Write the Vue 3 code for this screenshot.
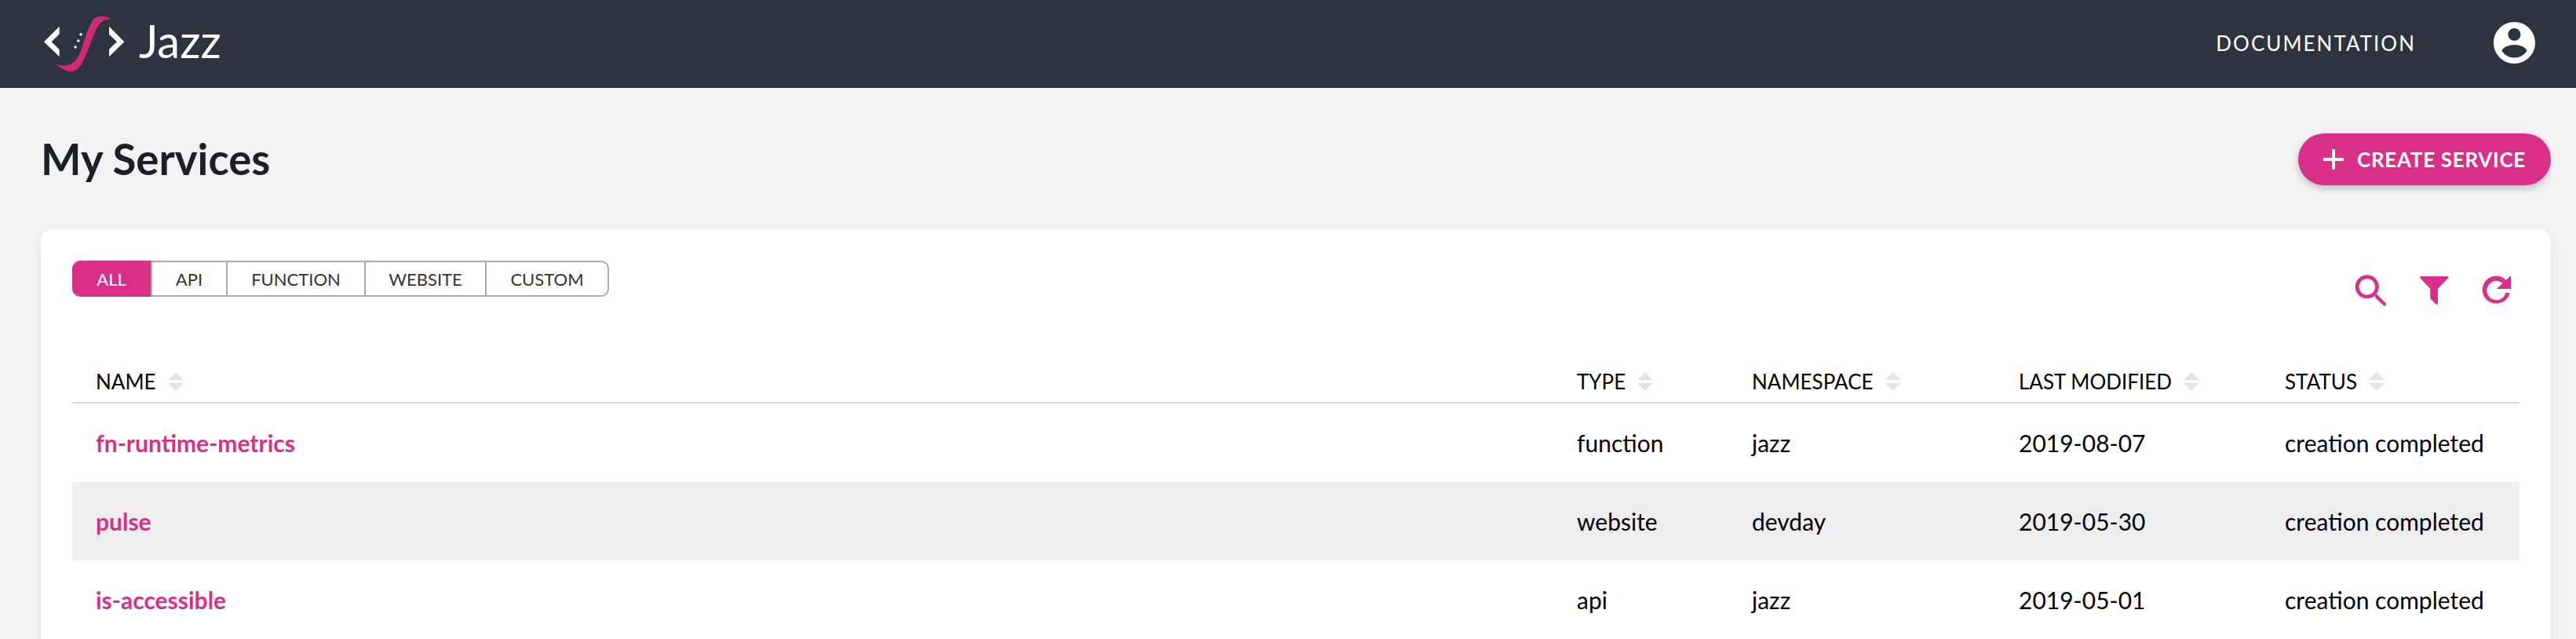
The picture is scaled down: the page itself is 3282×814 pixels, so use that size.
<script setup>
const tabs = [
  { label: 'ALL', cls: 'all' },
  { label: 'API', cls: 'api' },
  { label: 'FUNCTION', cls: 'function' },
  { label: 'WEBSITE', cls: 'website' },
  { label: 'CUSTOM', cls: 'custom' },
]
const columns = ['NAME', 'TYPE', 'NAMESPACE', 'LAST MODIFIED', 'STATUS']
const services = [
  { name: 'fn-runtime-metrics', type: 'function', namespace: 'jazz', modified: '2019-08-07', status: 'creation completed' },
  { name: 'pulse', type: 'website', namespace: 'devday', modified: '2019-05-30', status: 'creation completed' },
  { name: 'is-accessible', type: 'api', namespace: 'jazz', modified: '2019-05-01', status: 'creation completed' },
]
</script>

<template>
  <div class="page">
    <header class="topbar">
      <div class="brand">
        <svg class="logo" viewBox="45 60 315 216">
          <path fill="#fff" d="M107 101 48 160l59 57v-27L77 160l30-30zM297 101l58 59-58 57v-29l30-28-30-29z" />
          <path fill="#cf2a75" d="M305 73C283 61 248 55 233 80C213 112 202 160 183 207C167 242 142 258 96 247C118 267 143 277 163 271C192 260 204 219 220 182C245 126 252 70 305 73Z" />
          <path fill="#fff" d="m187 126 8 3-3 8-9-3zM177 150l8 3-3 8-9-3zM166 174l8 3-3 8-9-3z" />
        </svg>
        <span class="brand-name">Jazz</span>
      </div>
      <nav class="nav">
        <a class="doc-link">DOCUMENTATION</a>
        <svg class="avatar" viewBox="2 2 20 20" fill="#fff">
          <path d="M12 2C6.48 2 2 6.48 2 12s4.480 10 10 10 10-4.480 10-10S17.520 2 12 2zm0 3c1.660 0 3 1.340 3 3s-1.340 3-3 3-3-1.340-3-3 1.340-3 3-3zm0 14.200c-2.500 0-4.710-1.280-6-3.220.030-1.990 4-3.080 6-3.080 1.990 0 5.970 1.090 6 3.080-1.290 1.940-3.500 3.220-6 3.220z" />
        </svg>
      </nav>
    </header>

    <div class="title-row">
      <h1>My Services</h1>
      <div class="button-clip">
        <button class="create">
          <svg class="plus" viewBox="0 0 26 26"><path d="M13 0v26M0 13h26" stroke="#fff" stroke-width="4" /></svg>
          <span>CREATE SERVICE</span>
        </button>
      </div>
    </div>

    <main class="card">
      <div class="toolbar">
        <div class="tabs">
          <div v-for="t in tabs" :key="t.label" class="tab" :class="t.cls">{{ t.label }}</div>
        </div>
        <div class="actions">
          <svg class="icon" viewBox="360 594 132 132">
            <circle cx="410.500" cy="646" r="38" fill="none" stroke="#da2f89" stroke-width="14" />
            <path d="M441 671l8 5 36 36-9 8-35-34z" />
          </svg>
          <svg class="icon" viewBox="596 594 132 132">
            <path d="M609 606H716V613L677 653V713H670L648 691V653L609 613Z" />
          </svg>
          <svg class="icon" viewBox="837 594 132 132">
            <path d="M953 669A53 53 0 1 1 939 620L957 603V654H903L925 632A36.500 36.500 0 1 0 937 669Z" />
          </svg>
        </div>
      </div>

      <div class="table">
        <div class="row head">
          <div v-for="c in columns" :key="c" class="cell">
            <span>{{ c }}</span>
            <svg class="sort" viewBox="0 0 20 24"><path d="M10 0 20 10H0zM0 14H20L10 24z" fill="#e4e4e4" /></svg>
          </div>
        </div>
        <div v-for="s in services" :key="s.name" class="row body">
          <div class="cell name">{{ s.name }}</div>
          <div class="cell">{{ s.type }}</div>
          <div class="cell">{{ s.namespace }}</div>
          <div class="cell">{{ s.modified }}</div>
          <div class="cell">{{ s.status }}</div>
        </div>
      </div>
    </main>
  </div>
</template>

<style>
body {
  background: #f3f3f3;
  overflow: hidden;
}
</style>

<style scoped>
.page {
  height: 814px;
  overflow: hidden;
  box-sizing: border-box;
  background: #f3f3f3;
  font-family: Lato, sans-serif;
  color: #000;
}
.topbar {
  height: 112px;
  box-sizing: border-box;
  background: #2d333f;
  color: #fff;
  display: flex;
  justify-content: space-between;
  align-items: center;
  padding: 0 52px 0 55px;
}
.brand {
  display: flex;
  align-items: center;
  gap: 17px;
}
.logo {
  width: 105px;
  height: 72px;
}
.brand-name {
  font-size: 58px;
  line-height: 72px;
  padding-bottom: 8px;
}
.nav {
  display: flex;
  align-items: center;
  padding-bottom: 3px;
}
.doc-link {
  font-size: 26px;
  line-height: 32px;
  letter-spacing: 2px;
  margin-right: 99px;
}
.avatar {
  width: 53px;
  height: 53px;
}
.title-row {
  height: 180px;
  display: flex;
  justify-content: space-between;
  align-items: flex-start;
  padding: 0 32px 0 52px;
}
h1 {
  margin: 56px 0 0;
  font-size: 54.5px;
  line-height: 68px;
  font-weight: 700;
  color: #1b2028;
}
.button-clip {
  overflow: hidden;
  padding: 58px 0 20px 20px;
}
.create {
  width: 322px;
  height: 66px;
  box-sizing: border-box;
  border: 0;
  border-radius: 33px;
  padding: 0 0 0 32px;
  background: #da2f89;
  color: #fff;
  display: flex;
  align-items: center;
  gap: 17px;
  font: 700 26px/32px Lato, sans-serif;
  letter-spacing: 0.7px;
  white-space: nowrap;
  box-shadow: 0 4px 10px rgba(0, 0, 0, 0.22);
}
.plus {
  width: 26px;
  height: 26px;
}
.card {
  height: 560px;
  box-sizing: border-box;
  margin: 0 32px 0 52px;
  padding: 40px 40px 0;
  background: #fff;
  border-radius: 14px;
  box-shadow: 0 6px 16px rgba(60, 60, 110, 0.1);
}
.toolbar {
  height: 122px;
  display: flex;
  justify-content: space-between;
  align-items: flex-start;
}
.tabs {
  display: flex;
  height: 46px;
  font-size: 22px;
  color: #333;
}
.tab {
  box-sizing: border-box;
  border: 2px solid #aaa;
  border-left: 0;
  display: flex;
  align-items: center;
  justify-content: center;
}
.all {
  width: 102px;
  background: #da2f89 padding-box;
  border-color: #da2f89 #aaa #da2f89 #da2f89;
  border-radius: 10px 0 0 10px;
  color: #fff;
}
.api { width: 96px; }
.function { width: 176px; }
.website { width: 154px; }
.custom {
  width: 156px;
  border-radius: 0 10px 10px 0;
}
.actions {
  display: flex;
  gap: 36px;
  padding: 16px 7px 0 0;
}
.icon {
  width: 44px;
  height: 44px;
  fill: #da2f89;
}
.row {
  display: grid;
  grid-template-columns: 1887px 223px 340px 339px 329px;
}
.cell {
  padding-left: 30px;
  display: flex;
  align-items: center;
  white-space: nowrap;
}
.head {
  height: 58px;
  border-bottom: 2px solid #dcdcdc;
  font-size: 26px;
}
.head .cell {
  gap: 15px;
  padding-top: 6px;
}
.sort {
  width: 20px;
  height: 24px;
}
.body {
  height: 100px;
  font-size: 30px;
}
.body:nth-child(odd) {
  background: #eee;
}
.name {
  font-weight: 700;
  color: #da2f89;
}
</style>
